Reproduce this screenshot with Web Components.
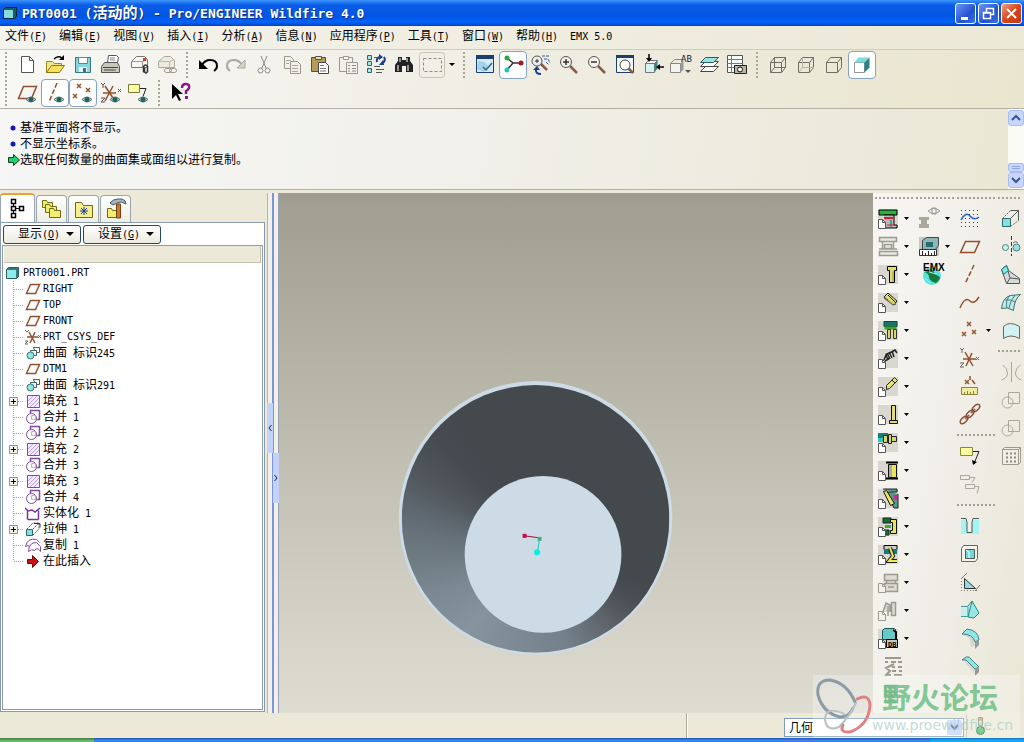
<!DOCTYPE html>
<html lang="zh-CN">
<head>
<meta charset="utf-8">
<title>PRT0001 (活动的) - Pro/ENGINEER Wildfire 4.0</title>
<style>
  html, body { height: 100%; }
  body {
    margin: 0;
    overflow: hidden;
    background: #ece9d8;
    font: 10px/16px "DejaVu Sans Mono", "Noto Sans CJK SC", monospace;
    color: #000;
  }
</style>
</head>
<body>
<app-window></app-window>

<script>
'use strict';

// ---- icon fragments -------------------------------------------------

const EYE = `<path d="M11 18.500q5-5 10 0q-5 5-10 0z" fill="#b9c9c4" stroke="#5d6f6c"/><circle cx="16" cy="18.500" r="2.500" fill="#1d6464"/>`;
const PAGE = `<path d="M2.500 13.500h4l3 3v6h-7z" fill="#fff" stroke="#555"/><path d="M6.500 13.500v3h3" fill="none" stroke="#555"/>`;
const GPAGE = `<path d="M2.500 13.500h4l3 3v6h-7z" fill="#f2f1ec" stroke="#9c9a8e"/><path d="M6.500 13.500v3h3" fill="none" stroke="#9c9a8e"/>`;
const PAD = `<path d="M2 3h20v19H2z" fill="#d9d7d0"/>`;
const XMARK = (x, y, c = '#9a5530') => `<path d="M${x - 2} ${y - 2}l4 4m0-4l-4 4" stroke="${c}" stroke-width="1.500" fill="none"/>`;
const LENS = (x, y) => `<path d="M${x + 4} ${y + 4}l7 7" stroke="#8a5a48" stroke-width="2.500"/><circle cx="${x}" cy="${y}" r="5.500" fill="#f4f3ee" stroke="#555"/>`;
const CUBE = `<path d="M4.500 9.500h11v10h-11zM4.500 9.500l4-5h11v10l-4 5M15.500 9.500l4-5" fill="none" stroke="#6f6d66"/>`;

// 24x24 toolbar glyphs
const ICONS = {
  new: `<path d="M6.500 3.500h8l4 4v12h-12z" fill="#fff" stroke="#555"/><path d="M14.500 3.500v4h4" fill="none" stroke="#555"/>`,
  open: `<path d="M3.500 19.500v-11h6l2 2h7v3" fill="#f0e68c" stroke="#a08a20"/><path d="M3.500 19.500l5-7h13l-5 7z" fill="#f7e060" stroke="#8a7510"/><path d="M11 6q4-4 8-1" fill="none" stroke="#000" stroke-width="1.500"/><path d="M21 2v5h-5z"/>`,
  save: `<path d="M4.500 4.500h15v15h-15z" fill="#86d8dc" stroke="#35777d"/><path d="M7.500 4.500h9v6h-9z" fill="#fff" stroke="#4d9096"/><path d="M8 14h8v5H8z" fill="#e9f7f7"/><path d="M12 15h3v4h-3z" fill="#3a7379"/>`,
  print: `<path d="M8.500 9.500l1-7h8l2 2-1 5z" fill="#fff" stroke="#555"/><path d="M11 5h5m-5 2h5" stroke="#888"/><path d="M2.500 13.500l3-4h13l2 4v6h-18z" fill="#c9c7bd" stroke="#555"/><path d="M4 14.500h15M5 17h11" stroke="#444"/><path d="M15 17h2" stroke="#48b048"/>`,
  mail: `<path d="M4.500 8.500l5-5h8l3 3v8h-16z" fill="#f6f6f2" stroke="#777"/><path d="M4.500 8.500h11l5-2m-5 2v6" fill="none" stroke="#999"/><path d="M16 5h3v3h-3z" fill="#c8402f"/><path d="M16.500 19.500v-6q2-3 4 0v5q-2 3-3 0v-4" fill="none" stroke="#333" stroke-width="1.500"/>`,
  maillink: `<path d="M3.500 8.500l6-5h6l4 4v7h-16z" fill="#eceae1" stroke="#aaa79b"/><path d="M3.500 8.500h11l5-2m-5 2v6" fill="none" stroke="#bbb8ac"/><rect x="9.500" y="15.500" width="7" height="4" rx="2" fill="none" stroke="#99968b"/><rect x="14.500" y="15.500" width="7" height="4" rx="2" fill="none" stroke="#99968b"/>`,
  undo: `<path d="M6 12q3-5 8-5q7 0 7 6q0 3-3 5" fill="none" stroke="#000" stroke-width="2"/><path d="M3 7v9h9z"/>`,
  redo: `<path d="M18 12q-3-5-8-5q-7 0-7 6q0 3 3 5" fill="none" stroke="#aaa79b" stroke-width="2"/><path d="M21 7v8h-8z" fill="#d5d2c6" stroke="#aaa79b"/>`,
  cut: `<path d="M9 3l5 12M15 3l-5 12" stroke="#8e8b80" fill="none"/><circle cx="8.500" cy="17.500" r="2.500" fill="none" stroke="#8e8b80"/><circle cx="15.500" cy="17.500" r="2.500" fill="none" stroke="#8e8b80"/>`,
  copy: `<path d="M4.500 3.500h6l3 3v9h-9z" fill="#f2f0e8" stroke="#9b988d"/><path d="M10.500 8.500h7l3 3v9h-10z" fill="#f2f0e8" stroke="#9b988d"/><path d="M6 7.500h5M6 10.500h3M12 12.500h6M12 15.500h6M12 18.500h6" stroke="#aaa79b"/>`,
  paste: `<path d="M3.500 4.500h14v14h-14z" fill="#b59a58" stroke="#5c5030"/><path d="M7.500 3.500h6v3h-6z" fill="#e6dcb8" stroke="#555"/><path d="M10.500 9.500h7l3 3v8h-10z" fill="#fff" stroke="#444"/><path d="M12 12.500h4M12 15.500h6M12 18h6" stroke="#777"/>`,
  pastespecial: `<path d="M3.500 4.500h13v14h-13z" fill="#f2f0e8" stroke="#9b988d"/><path d="M7.500 3.500h5v3h-5z" fill="#fff" stroke="#9b988d"/><path d="M10.500 9.500h11v11h-11z" fill="#f2f0e8" stroke="#9b988d"/><path d="M12 12.500h2m2 0h4M12 15.500h2m2 0h4M12 18h2m2 0h4" stroke="#8e8b80"/>`,
  regen: `<path d="M3.500 2.500h4v4h-4zM3.500 8.500h4v4h-4zM3.500 15.500h4v4h-4z" fill="#a4e6e2" stroke="#2c6666"/><path d="M10 4.500h3M10 13.500h6M12 16.500h8M12 19.500h6" stroke="#555"/><path d="M13 9q-1-4 3-5M20 4q2 3-1 6" fill="none" stroke="#163e94" stroke-width="2"/><path d="M15 1l4 3-4 3zM20 12h-5l4-5z" fill="#163e94"/>`,
  find: `<path d="M6 4h4v3h4V4h4v4l3 4v7h-7v-6h-4v6H3v-7l3-4z" fill="#222"/><path d="M6 12v6M16 12v6M8 5v4M15 5v4" stroke="#bbb" stroke-width="1.500"/>`,
  marquee: `<rect x="-.5" y="-.5" width="25" height="25" rx="3" fill="none" stroke="#c9c5b4"/><rect x="3.500" y="5.500" width="18" height="13" fill="none" stroke="#8f8c82" stroke-dasharray="3 2"/>`,
  repaint: `<path d="M3.500 3.500h17v16h-17z" fill="#d4ecf8" stroke="#1c3d72"/><path d="M3 2h18v4H3z" fill="#1c3d72"/><path d="M5 8q8 0 11 6l-5 5-7-3z" fill="#a4d0e8"/><path d="M10 14l3 3 6-7" fill="none" stroke="#355f8c" stroke-width="1.500"/>`,
  spin: `<path d="M6 5l6 5-6 7M12 10h8" fill="none" stroke="#333" stroke-width="1.500"/><circle cx="6" cy="5" r="2.500" fill="#24a83c"/><circle cx="20" cy="10" r="2.500" fill="#a81824"/><circle cx="6" cy="17" r="2.500" fill="#24c4c4"/>`,
  orient: `<path d="M11 10l7 7" stroke="#8a5a48" stroke-width="2.500"/><circle cx="8" cy="8" r="5" fill="#eee" stroke="#555"/><path d="M6 8h4M8 6v4" stroke="#333"/><path d="M13 3h8M15 6h4l2 4M17 9l3 3" stroke="#3957a0" stroke-dasharray="3 1" fill="none"/><path d="M12 21q-6 0-5-5" fill="none" stroke="#163e94" stroke-width="2"/><path d="M4 17l4-4 3 4z" fill="#163e94"/>`,
  zoomin: LENS(9, 9) + `<path d="M6 9h6M9 6v6" stroke="#333" stroke-width="1.500"/>`,
  zoomout: LENS(9, 9) + `<path d="M6 9h6" stroke="#333" stroke-width="1.500"/>`,
  refit: `<path d="M3.500 3.500h17v16h-17z" fill="#f4f6f8" stroke="#1c3d72"/><path d="M3 2h18v3H3z" fill="#1c3d72"/><path d="M15 15l5 5" stroke="#8a5a48" stroke-width="2.500"/><circle cx="12" cy="12" r="5" fill="#fff" stroke="#444"/>`,
  views: `<path d="M4.500 10.500h9v9h-9z" fill="#d6f4f2" stroke="#777"/><path d="M4.500 10.500l3-3h9l-3 3z" fill="#fff" stroke="#777"/><path d="M13.500 10.500l3-3v8l-3 4z" fill="#38888a"/><path d="M8 1v6M23 14h-5" stroke="#000" stroke-width="1.500"/><path d="M5 5h6l-3 4zM19 11v6l-4-3z"/>`,
  namedview: `<path d="M1.500 10.500h10v9h-10z" fill="#f4f3ee" stroke="#888"/><path d="M1.500 10.500l4-4h8" fill="none" stroke="#888"/><path d="M11.500 10.500l3-3v9l-3 3z" fill="#999"/><text x="12" y="9" font-family="DejaVu Sans Mono" font-size="9" fill="#222">AB</text><path d="M16 17h6l-3 3z" fill="#555"/>`,
  layers: `<path d="M3.500 18.500l5-5h13l-5 5zM3.500 13.500l5-5h13l-5 5z" fill="#fff" stroke="#444"/><path d="M3.500 9.500l5-5h13l-5 5z" fill="#96e6e0" stroke="#2a5c5c"/>`,
  viewmgr: `<path d="M2.500 2.500h15v17h-15z" fill="#fff" stroke="#555"/><path d="M2.500 6.500h15m-15 4h15m-15 4h15M6.500 2.500v17" stroke="#777"/><path d="M9.500 12.500h12v8h-12z" fill="#b9b6a4" stroke="#222"/><circle cx="15" cy="16.500" r="2.500" fill="#fff" stroke="#111"/>`,
  wire: CUBE + `<path d="M8.500 4.500v10h11M8.500 14.500l-4 5" fill="none" stroke="#6f6d66"/>`,
  hidden: CUBE + `<path d="M8.500 4.500v10h11M8.500 14.500l-4 5" fill="none" stroke="#b5b2a8"/>`,
  nohidden: CUBE,
  shaded: `<path d="M4.500 9.500h10v10h-10z" fill="#fff" stroke="#999"/><path d="M4.500 9.500l4-5h11l-5 5z" fill="#78dce0"/><path d="M14.500 9.500l5-5v10l-5 5z" fill="#2d8084"/>`,

  dplane: `<path d="M3.500 17.500l5-12h13l-5 12z" fill="none" stroke="#93502e" stroke-width="1.500"/>` + EYE,
  daxis: `<path d="M14 2l-8 19" fill="none" stroke="#93502e" stroke-width="1.500" stroke-dasharray="5 2"/>` + EYE,
  dpoint: XMARK(8, 5) + XMARK(4, 15) + XMARK(17, 9) + EYE,
  dcsys: `<path d="M4 12h13M14 5L6 20M6 5l8 12" fill="none" stroke="#93502e" stroke-width="1.500"/><path d="M2 2l2 2 2-2m-2 2v3M2 17h4l-4 4h4M19 8l3 3m0-3l-3 3" fill="none" stroke="#555"/>` + EYE,
  dnote: `<path d="M1.500 3.500h11v8h-11z" fill="#ffffa0" stroke="#777b40"/><path d="M13 7.500h6l-3 8" fill="none" stroke="#222"/>` + EYE,
  whatsthis: `<path d="M4 3v15l4-4 3 6 2-1-3-6h5z"/><path d="M14 7q0-4 4-4t3 4q-1 2-3 3v3" fill="none" stroke="#8a168a" stroke-width="2.500"/><path d="M17 15h3v3h-3z" fill="#8a168a"/>`,

  // mold base column
  plate: PAD + `<path d="M3 4h18v5H3z" fill="#26b43a" stroke="#000"/><path d="M8 9h10v10h3v3H9" fill="#c4b4b4" stroke="#000"/><path d="M8 12h9" stroke="#d02030" stroke-width="2"/><path d="M15 14v7" stroke="#30a8a8" stroke-width="2"/><path d="M11 19h8" stroke="#d02030"/>` + PAGE,
  plategrey: `<path d="M3.500 3.500h17v4h-17zM6.500 7.500v7M17.500 7.500v7M8.500 10.500h7v4h-7zM3.500 17.500h18v4h-18zM3 15h18" fill="#e8e7e0" stroke="#9c9a8e" stroke-width="1.500"/>`,
  screw: PAD + `<path d="M11.500 4.500h9v4h-2v12h-5v-12h-2z" fill="#e2de70" stroke="#000"/><path d="M17 9v11" stroke="#98953a"/>` + PAGE,
  pins: PAD + `<path d="M8 7l4-4 9 8-3 4zM12 5l8 8" fill="#e0dc6c" stroke="#222"/><path d="M8 8l9 7 3-1" stroke="#555" fill="#c8c068"/>` + PAGE,
  guide: PAD + `<path d="M8 3.500h13v5H8z" fill="#15766c" stroke="#084840"/><path d="M8.500 8.500h12v3h-12z" fill="#48a028"/><path d="M11.500 11.500h3v9h-3zM17.500 11.500h3v9h-3z" fill="#dcd858" stroke="#333"/>` + PAGE,
  spring: PAD + `<path d="M8 14l2-5 2 5M11 7l3 6M13 6l3 6M16 5l2 6M10 9l9-5 2 3M9 15l5-3" fill="none" stroke="#222" stroke-width="1.500"/>` + PAGE,
  pencil: PAD + `<path d="M10.500 11.500l8-8 3 3-8 8-3 1z" fill="#e6e276" stroke="#222"/><path d="M16 6l3 3" stroke="#222"/>` + PAGE,
  bolt: PAD + `<path d="M15.500 3.500h4v15h-4zM13.500 18.500h8v3h-8z" fill="#e2de70" stroke="#111"/>` + PAGE,
  pipe: PAD + `<path d="M2 3h10v5H2z" fill="#168078"/><path d="M2 8h5v4H2z" fill="#28c8c0"/><path d="M7.500 5.500h4v7h-4zM12.500 4.500h3v9h-3zM15.500 6.500h5v5h-5z" fill="#d8d470" stroke="#222"/>` + PAGE,
  sleeve: PAD + `<path d="M10 4.500h12M10 20.500h12" stroke="#000" stroke-width="2"/><path d="M12.500 6.500h8v13h-8z" fill="#e8e45c" stroke="#111"/><path d="M13 7h3v12h-3z" fill="#aaa"/>` + PAGE,
  slider: PAD + `<path d="M7 3h14v3H10l8 16h4V8" fill="#5a9890" stroke="#222"/><path d="M7.500 5.500l3-1 8 13-4 2z" fill="#e8e45c" stroke="#111"/><path d="M17 9h4v5h-3z" fill="#c030a0"/>` + PAGE,
  latch: PAD + `<path d="M7 4h8v5H7zM7 16h6v5H7z" fill="#137030" stroke="#222"/><path d="M14.500 5.500h6v14h-6v-3h2v-8h-2z" fill="#e8e45c" stroke="#111"/><path d="M9 11h6v3H9z" fill="#40a840"/>` + PAGE,
  lifter: PAD + `<path d="M8 3.500h13v4H8z" fill="#d0ccc0" stroke="#000"/><path d="M8 7h13v5H8z" fill="#137a78"/><path d="M14 6l3 8-4 5h8" fill="none" stroke="#222" stroke-width="4"/><path d="M14 6l3 8-4 5h8" fill="none" stroke="#f0e850" stroke-width="2"/>` + PAGE,
  pressgrey: `<path d="M8.500 4.500h13v6h-13zM10.500 10.500h9v3h-9zM8.500 13.500h13v8h-13zM12 17h6" fill="#dddbd2" stroke="#9c9a8e" stroke-width="1.500"/>` + GPAGE,
  rollgrey: `<path d="M7 14l3-9 4 2v7M15.500 4.500h4v13h-4zM12 8v10" fill="#dddbd2" stroke="#9c9a8e" stroke-width="1.500"/>` + GPAGE,
  library: PAD + `<path d="M6.500 4.500l2-2h10l1 1v10h-13z" fill="#68c8c8" stroke="#155"/><path d="M17 4l3 2v9" fill="none" stroke="#000" stroke-width="2"/><path d="M10.500 13.500h11v8h-11z" fill="#c8c6b8" stroke="#000"/><text x="12" y="21" font-family="DejaVu Sans Mono" font-size="7" font-weight="bold">DB</text>` + PAGE,
  bomgrey: `<path d="M11 4h16M11 8h3M17 8h5M24 8h4M11 22l5-5-4-3 8-4M18 13h3M24 13h4M18 17h4M25 17h3M12 21h5M20 21h8" transform="translate(-2 0)" fill="none" stroke="#9c9a8e" stroke-width="2"/>`,
  chartgrey: `<path d="M9.500 3.500h12v7h-12zM9.500 12.500h12v8h-12zM12 15h7M12 18h7M12 6h7" fill="#d5d3c8" stroke="#7c9a82" stroke-width="1.500"/>`,
  lampgrey: `<path d="M11 5q6-5 12 0q-6 5-12 0zM15 2h4v6h-4z" fill="#eee" stroke="#9c9a8e"/><path d="M2 11h10v3h-2v4h2v4H2v-4h2v-4H2z" fill="#aaa79b"/>`,
  measure: `<path d="M2 3h20v19H2z" fill="#c9c7c0"/><path d="M5.500 6.500l4-3h12v8l-3 4h-13z" fill="#8fb6b6" stroke="#444"/><path d="M9 8h7v5H9z" fill="#276c6c"/><path d="M2.500 15.500h17v6h-17z" fill="#fff" stroke="#333"/><path d="M5.500 17v4m3-2v2m3-4v4m3-2v2m3-4v4" stroke="#222"/>`,
  emx: `<circle cx="15" cy="14" r="9" fill="#5ce0dc"/><path d="M7 10q5 1 5 5t7 6q4-3 4-6l-5-3-2-4z" fill="#177a38"/><path d="M8 16l5 5M12 10l7 2" stroke="#a4f4f4"/><text x="6" y="9" font-family="Liberation Sans" font-size="10" font-weight="bold">EMX</text>`,

  // datum column
  sketch: `<path d="M3 4.500h18M3 8.500h18M3 12.500h18M3 16.500h18M3 20.500h18" stroke="#1c3a96" stroke-dasharray="1 3"/><path d="M3 14q5-9 9-4t9 1" fill="none" stroke="#2c62d0" stroke-width="1.500"/>`,
  plane: `<path d="M2.500 18.500l5-11h14l-5 11z" fill="none" stroke="#93502e" stroke-width="1.500"/>`,
  axis: `<path d="M16 3L7 22" stroke="#93502e" stroke-width="1.500" stroke-dasharray="5 2"/>`,
  curve: `<path d="M2 18q5-12 10-7 4 4 9-4" fill="none" stroke="#93502e" stroke-width="1.500"/>`,
  points: XMARK(11, 6) + XMARK(6, 16) + XMARK(16, 14),
  csys: `<path d="M5 13h13M14 7L8 20M7 6l8 14" fill="none" stroke="#93502e" stroke-width="1.500"/><path d="M2 2l2 2 2-2m-2 2v3M2 17h4l-4 4h4M18 11l3 3m0-3l-3 3" fill="none" stroke="#666"/>`,
  analysis: XMARK(9, 8) + `<path d="M12 2v4M14 6l3 4" stroke="#93502e" stroke-width="1.500"/><path d="M3.500 13.500h16v7h-16z" fill="#f0eca0" stroke="#8a8640"/><path d="M6.500 18v2m3-3v3m3-2v2m3-3v3" stroke="#8a8640"/>`,
  chain: `<g fill="none" stroke="#8a5038" stroke-width="1.500"><ellipse cx="6" cy="18" rx="4.500" ry="2.500" transform="rotate(-45 6 18)"/><ellipse cx="12" cy="12" rx="4.500" ry="2.500" transform="rotate(-45 12 12)"/><ellipse cx="18" cy="6" rx="4.500" ry="2.500" transform="rotate(-45 18 6)"/><path d="M7 17l4-4M13 11l4-4"/></g>`,
  note: `<path d="M2.500 3.500h12v8h-12z" fill="#ffffa0" stroke="#888a30"/><path d="M15 7.500h6l-5 12" fill="none" stroke="#222"/><path d="M14 16l1 5 4-3z"/>`,
  notesgrey: `<path d="M2.500 3.500h9v4h-9zM7.500 12.500h9v4h-9zM12 5.500h5l-3 5M17 14.500h4l-2 7" fill="none" stroke="#aaa79b"/>`,
  hole: `<path d="M3 6h18v14H3z" fill="#a4f4f4"/><path d="M3 4.500h5l1 4v10h5v-10l1-4h6" fill="#f0eee4" stroke="#555"/>`,
  shell: `<path d="M3.500 6.500l2-3h14v13l-2 3h-14z" fill="#f4f3ea" stroke="#666"/><path d="M7.500 7.500h9v9h-9z" fill="#70d8d8" stroke="#555"/><path d="M8 8l3 2v6" fill="none" stroke="#fff"/>`,
  rib: `<path d="M3 9l6-6M17 21l5-6" stroke="#777"/><path d="M6.500 8.500v10h11z" fill="#90dce0" stroke="#333"/><path d="M3 20.500h18M3.500 8v12" stroke="#777" stroke-dasharray="1 2"/>`,
  draft: `<path d="M3 7h8l3 12H3z" fill="#c4f0f0"/><path d="M3 8.500h7v10H3" fill="none" stroke="#4a9c9c"/><path d="M10 8l4-5 7 12-5 5-6-1 4-16" fill="#98e8e8" stroke="#2a8484"/>`,
  round: `<path d="M5 4q13-2 13 15l-5 2q0-11-8-12z" fill="#d8d5cc"/><path d="M4 8l5-5q11 1 12 11l-4 2q-2-8-13-8z" fill="#8ce8e8" stroke="#4a8080"/><path d="M17 16l4-2v5l-4 4z" fill="#999"/>`,
  chamfer: `<path d="M4 5l13 15v-8z" fill="#dcd9d0"/><path d="M4 6l4-3h3l10 10-4 2L8 6z" fill="#8ce8e8" stroke="#4a8080"/><path d="M17 15l4-2v5l-4 4z" fill="#999"/>`,

  // feature column
  extrude: `<path d="M3.500 12.500h8v8h-8z" fill="#86e0e0" stroke="#2a6c6c"/><path d="M3.500 12.500l8-8M11.500 20.500l8-6" stroke="#666" stroke-dasharray="2 1"/><path d="M11.500 4.500h8v10M11.500 12.500l8-8" fill="none" stroke="#555"/>`,
  revolve: `<circle cx="6.500" cy="13.500" r="3" fill="#c8f0f0" stroke="#4a8080"/><circle cx="17.500" cy="13.500" r="3.500" fill="#98e0e0" stroke="#4a8080"/><path d="M12.500 2v20" stroke="#333" stroke-dasharray="4 2"/><path d="M14 9q3-3 5 0" stroke="#666" fill="none"/>`,
  sweep: `<path d="M2.500 7.500l5-4 2 5 11 8v5h-13z" fill="#d4dada" stroke="#555"/><path d="M2.500 7.500l5-4 2 5-5 4z" fill="#80e8e8" stroke="#2a6c6c"/><path d="M9 9l2 7 9 1M11 16l-3 5" fill="none" stroke="#555"/>`,
  boundary: `<path d="M2.500 18.500q1-11 9-13l10-1q-6 4-7 16-6-4-12-2z" fill="#b8ecec" stroke="#4a6c6c"/><path d="M6 10q6-1 10 2M11 5q-5 6-3 13M16 5q-5 6-6 13" fill="none" stroke="#4a7c7c"/>`,
  style: `<path d="M4.500 8.500q6-6 16 0v12q-9-5-16 0z" fill="#d4f2f2" stroke="#666"/>`,
  mirrorgrey: `<path d="M3.500 5q5 3 5 8t-6 7M21.500 5q-5 3-5 8t6 7M12.500 2v20" fill="none" stroke="#aaa79b"/>`,
  mergegrey: `<circle cx="8.500" cy="14.500" r="5.500" fill="none" stroke="#aaa79b"/><path d="M9.500 4.500h11v11h-11z" fill="none" stroke="#aaa79b"/>`,
  patterngrey: `<path d="M3.500 5.500l2-2h16v15l-2 2h-16zM3.500 5.500h16v15M19.500 5.500l2-2" fill="#f0eee6" stroke="#9c9a8e"/><path d="M7 9.500h10M7 13.500h10M7 17.500h10" stroke="#8e8b80" stroke-width="2" stroke-dasharray="2 2"/>`,

  // panel tabs
  tabtree: `<path d="M7.500 4v14M7 11.500h9" stroke="#000"/><path d="M5.500 2.500h4v4h-4zM5.500 9.500h4v4h-4zM5.500 16.500h4v4h-4zM13.500 9.500h4v4h-4z" fill="#fff" stroke="#000" stroke-width="1.500"/>`,
  tabfolders: `<g fill="#f4ee70" stroke="#6e6a18"><path d="M2.500 10.500v-7h4l1 2h5v5z"/><path d="M5.500 15.500v-8h4l1 2h6v6z"/><path d="M9.500 20.500v-9h4l1 2h6v7z"/></g>`,
  tabfav: `<path d="M3.500 20.500v-15h6l2 3h9v12z" fill="#f4ee90" stroke="#6e6a18"/><path d="M12 10v8M8 14h8M9 11l6 6m0-6l-6 6" stroke="#1c3a96"/>`,
  tabtools: `<path d="M3.500 20.500v-9h4l1 2h6v7z" fill="#f4ee70" stroke="#6e6a18"/><path d="M6 6q3-4 8-4h4q4 1 4 5l-5-2-4 1-4 2z" fill="#a8b4bc" stroke="#4a5a66"/><path d="M12.500 7h4v14h-4z" fill="#c87a30" stroke="#7a4010"/>`,
};

// 16x16 model tree glyphs
const TREE_ICONS = {
  part: `<path d="M1.500 4.500l2-2h10v9l-2 2h-10z" fill="#387c7c" stroke="#2a5c5c"/><path d="M2 5h9v8H2z" fill="#8cecec"/>`,
  plane: `<path d="M1.500 12.500l4-9h9l-4 9z" fill="none" stroke="#93502e" stroke-width="1.500"/>`,
  csys: `<path d="M2 8h11M10 3L5 14M4 3l6 11" fill="none" stroke="#93502e" stroke-width="1.500"/><path d="M0 1l2 2 2-2M0 12h3l-3 3h3M13 6l3 3m0-3l-3 3" fill="none" stroke="#666"/>`,
  surf: `<path d="M8.500 2.500h6v5h-4z" fill="#fff" stroke="#4a6060"/><path d="M5.500 5.500h6v5h-5z" fill="#e8f6f6" stroke="#4a6060"/><circle cx="5.500" cy="10.500" r="3.500" fill="#8ce8e0" stroke="#4a7070"/>`,
  fill: `<path d="M2.500 2.500h12v12h-12z" fill="#f4ecfc" stroke="#8048a0"/><path d="M3 8l5-5M3 12l9-9M5 14l9-9M9 14l5-5" stroke="#c0a0e4"/>`,
  merge: `<path d="M5.500 4.500v-3h9v9h-3" fill="none" stroke="#8048a0" stroke-width="1.500"/><circle cx="6.500" cy="9.500" r="5" fill="none" stroke="#8048a0"/><path d="M6.500 6.500h4v4h-4z" fill="none" stroke="#c0b0d0"/>`,
  solid: `<path d="M2.500 14.500v-9M13.500 14.500v-9M2.500 14.500h11M0 3l3 3 4-1 3 2 5-4" fill="none" stroke="#703898" stroke-width="1.500"/>`,
  extrude: `<path d="M1.500 8.500h6v6h-6z" fill="#86e0e0" stroke="#2a6c6c"/><path d="M2 8l6-6h6v6l-6 6M8 8l6-6" fill="none" stroke="#555" stroke-dasharray="2 1"/><path d="M9 2.500h6v4" stroke="#333" fill="none"/>`,
  copy: `<path d="M.5 9.500q2-9 11-7l3 3M.5 9.500q3-2 4 0M3.500 14.500q0-9 8-9l4 4v5q-3-5-6-1-3-2-6 1z" fill="none" stroke="#8048a0"/>`,
  insert: `<path d="M2.500 6.500h5v-4l6 6-6 6v-4h-5z" fill="#c81418" stroke="#800"/>`,
};

// CJK glyphs are set at 12px beside 10px latin, so both fill the same cell grid.
// "_X_" marks the mnemonic letter.
function mixed(text) {
  return text
      .replace(/[\u3000-\u9fff]+/g, run => `<span class="cjk">${run}</span>`)
      .replace(/_([A-Z])_/g, '<u>$1</u>');
}

const BASE = `
  :host { display: block; box-sizing: border-box; }
  * { box-sizing: border-box; }
  button { font: inherit; color: inherit; margin: 0; padding: 0; border: 0; background: none; }
  svg { display: block; flex: none; }
  .cjk { font-size: 12px; }
`;

class BaseElement extends HTMLElement {
  constructor() {
    super();
    this.attachShadow({mode: 'open'});
  }

  connectedCallback() {
    this.shadowRoot.innerHTML = `<style>${BASE}</style>` + this.render();
  }
}

class PeIcon extends BaseElement {
  render() {
    return `
      <style>:host { flex: none; width: 24px; height: 24px; } svg { overflow: visible; }</style>
      <svg width="24" height="24" viewBox="0 0 24 24" aria-hidden="true">${ICONS[this.getAttribute('name')]}</svg>`;
  }
}

class TitleBar extends BaseElement {
  render() {
    return `
      <style>
        :host {
          display: flex; align-items: center; gap: 4px; height: 26px; padding: 0 2px;
          background: linear-gradient(#3c96fc, #0a5ce8 5px, #0254e2 16px, #0464fa 22px, #0340c4);
        }
        h1 { flex: 1; margin: 0; font: bold 13px/20px "DejaVu Sans Mono", "Noto Sans CJK SC", monospace; color: #fff; text-shadow: 1px 1px #0a2c88; }
        .cjk { font-size: 15px; }
        div { display: flex; gap: 2px; }
        button { width: 21px; height: 21px; border: 1px solid #fff; border-radius: 3px; background: linear-gradient(135deg, #6c98f4, #2450d0 60%, #3c74e8); }
        button.close { background: linear-gradient(135deg, #f0a084, #d8451c 50%, #c03a14); }
      </style>
      <svg width="16" height="16" viewBox="0 0 16 16"><path d="M1.500 4.500l2-2h11v9l-2 2h-11z" fill="#1c5c60" stroke="#124"/><path d="M2 5h9v8H2z" fill="#84dcdc"/></svg>
      <h1>${mixed('PRT0001 (活动的) - Pro/ENGINEER Wildfire 4.0')}</h1>
      <div>
        <button aria-label="最小化"><svg width="19" height="19"><path d="M5 13h7v3H5z" fill="#fff"/></svg></button>
        <button aria-label="还原"><svg width="19" height="19"><path d="M7.500 8V4.500h7v6H12M4.500 8.500h7v6h-7zM4 9h8" fill="none" stroke="#fff" stroke-width="1.500"/></svg></button>
        <button class="close" aria-label="关闭"><svg width="19" height="19"><path d="M5 5l9 9m0-9l-9 9" stroke="#fff" stroke-width="2"/></svg></button>
      </div>`;
  }
}

class MenuBar extends BaseElement {
  render() {
    const items = ['文件(_F_)', '编辑(_E_)', '视图(_V_)', '插入(_I_)', '分析(_A_)', '信息(_N_)',
      '应用程序(_P_)', '工具(_T_)', '窗口(_W_)', '帮助(_H_)', 'EMX 5.0'];
    return `
      <style>
        :host { height: 24px; padding: 2px 5px; border-bottom: 1px solid #cfccbb; background: linear-gradient(90deg, #f4f3ec, #ebe8d6); }
        nav { display: flex; gap: 12px; }
        button { white-space: nowrap; line-height: 16px; }
      </style>
      <nav>${items.map(item => `<button>${mixed(item)}</button>`).join('')}</nav>`;
  }
}

// items: space separated icon names; "|" is a grip, "v" a drop arrow, "+" prefix means pressed
class ToolBar extends BaseElement {
  render() {
    const html = this.getAttribute('items').split(' ').map(item => {
      if (item === '|') return '<i></i>';
      if (item === 'v') return '<button class="drop" aria-label="more"><svg width="6" height="4"><path d="M0 0h6L3 3z"/></svg></button>';
      const on = item[0] === '+';
      const name = on ? item.slice(1) : item;
      return `<button aria-label="${name}" aria-pressed="${on}"><pe-icon name="${name}"></pe-icon></button>`;
    }).join('');
    return `
      <style>
        :host { display: flex; align-items: center; height: 28px; }
        i { width: 3px; height: 26px; margin: 0 5px; background: repeating-linear-gradient(#a9a798 0 2px, transparent 2px 4px); background-size: 2px 100%; background-repeat: no-repeat; }
        button { display: grid; place-items: center; width: 28px; height: 28px; border: 1px solid transparent; border-radius: 4px; }
        button[aria-pressed=true] { background: #fff; border-color: #86a2bc; }
        .drop { width: 12px; }
      </style>${html}`;
  }
}

class MessageLog extends BaseElement {
  render() {
    return `
      <style>
        :host { display: flex; height: 82px; border: solid #b3b0a1; border-width: 1px 0; background: linear-gradient(100deg, #f6f6f6, #f1f0ea 45%, #eae7d4); }
        ul { flex: 1; margin: 0; padding: 11px 8px; list-style: none; }
        li { display: flex; align-items: center; height: 16px; }
        .bar { display: flex; flex-direction: column; width: 16px; padding: 1px 0; background: #fbfbf6; }
        .bar button { display: grid; place-items: center; height: 16px; border: 1px solid #a9bdf0; border-radius: 3px; background: #c8d6fb; }
        .bar span { flex: 1; }
        .bar b { height: 9px; border: 1px solid #a9bdf0; border-radius: 2px; background: repeating-linear-gradient(#c8d6fb 0 1px, #8ca8e8 1px 2px) center / 8px 5px no-repeat #c8d6fb; }
      </style>
      <ul>
        <li><svg width="12" height="12"><circle cx="5" cy="6" r="2.500" fill="#1414c4"/></svg>${mixed('基准平面将不显示。')}</li>
        <li><svg width="12" height="12"><circle cx="5" cy="6" r="2.500" fill="#1414c4"/></svg>${mixed('不显示坐标系。')}</li>
        <li><svg width="12" height="12"><path d="M.5 3.500h5v-3l6 5.500-6 5.500v-3h-5z" fill="#22d070" stroke="#0a4020"/></svg>${mixed('选取任何数量的曲面集或面组以进行复制。')}</li>
      </ul>
      <div class="bar">
        <button aria-label="up"><svg width="10" height="8"><path d="M1 6l4-4 4 4" fill="none" stroke="#3c5490" stroke-width="2"/></svg></button>
        <span></span><b></b>
        <button aria-label="down"><svg width="10" height="8"><path d="M1 2l4 4 4-4" fill="none" stroke="#3c5490" stroke-width="2"/></svg></button>
      </div>`;
  }
}

class ModelTree extends BaseElement {
  glyph(name) {
    return `<svg width="16" height="16" viewBox="0 0 16 16">${TREE_ICONS[name]}</svg>`;
  }

  render() {
    // [icon, label, expandable]
    const nodes = [
      ['plane', 'RIGHT'], ['plane', 'TOP'], ['plane', 'FRONT'], ['csys', 'PRT_CSYS_DEF'],
      ['surf', '曲面 标识245'], ['plane', 'DTM1'], ['surf', '曲面 标识291'],
      ['fill', '填充 1', true], ['merge', '合并 1'], ['merge', '合并 2'],
      ['fill', '填充 2', true], ['merge', '合并 3'], ['fill', '填充 3', true],
      ['merge', '合并 4'], ['solid', '实体化 1'], ['extrude', '拉伸 1', true],
      ['copy', '复制 1'], ['insert', '在此插入'],
    ];
    const rows = nodes.map(([icon, label, plus], i) => {
      const end = i === nodes.length - 1 ? 8 : 16;
      const box = plus ? '<path d="M.5 4.500h8v8h-8z" fill="#f4f2ea" stroke="#7c94ac"/><path d="M2 8.500h5M4.500 6v5" stroke="#000"/>' : '';
      return `<li role="treeitem">
        <svg width="16" height="16"><path d="M4.500 0v${end}M5 8.500h9" stroke="#a9a696" stroke-dasharray="1 1"/>${box}</svg>
        ${this.glyph(icon)}<span>${mixed(label)}</span></li>`;
    }).join('');
    return `
      <style>
        :host { flex: 1; min-height: 0; overflow: hidden; }
        ul { margin: 0; padding: 0; list-style: none; }
        li { display: flex; align-items: center; height: 16px; padding-left: 6px; }
        li > span { padding-left: 2px; line-height: 16px; white-space: pre; }
        .root { padding-left: 2px; }
      </style>
      <ul role="tree">
        <li class="root" role="treeitem">${this.glyph('part')}<span>PRT0001.PRT</span></li>
        ${rows}
      </ul>`;
  }
}

class NavPanel extends BaseElement {
  render() {
    const arrow = '<svg width="8" height="5"><path d="M0 0h8L4 4z"/></svg>';
    return `
      <style>
        :host { display: flex; flex-direction: column; width: 265px; padding-bottom: 1px; }
        .tabs { display: flex; align-items: flex-end; gap: 1px; height: 29px; }
        .tabs button { display: grid; place-items: center; width: 31px; height: 27px; border: 1px solid #9aa6ae; border-bottom: 0; border-radius: 4px 4px 0 0; background: linear-gradient(#fdfdfb, #f0eee4); }
        .tabs .on { width: 35px; height: 29px; border-top: 2px solid #f0a030; background: #fff; }
        .body { flex: 1; min-height: 0; display: flex; flex-direction: column; gap: 1px; padding: 2px 1px 1px; border: 1px solid #8a9aaf; background: #fff; }
        .actions { display: flex; gap: 2px; padding-left: 1px; }
        .actions button { display: flex; justify-content: flex-end; align-items: center; gap: 6px; width: 78px; height: 19px; padding-right: 6px; border: 1px solid #24486c; border-radius: 3px; background: linear-gradient(#fff, #ece9de); line-height: 16px; }
        .tree { flex: 1; min-height: 0; display: flex; flex-direction: column; border: 1px solid #8a9aaf; }
        .head { height: 17px; margin: 0 1px 2px; border-right: 1px solid #c4c0ae; border-bottom: 1px solid #c4c0ae; background: #ece9d8; }
      </style>
      <div class="tabs" role="tablist">
        <button class="on" role="tab" aria-label="模型树"><pe-icon name="tabtree"></pe-icon></button>
        <button role="tab" aria-label="文件夹"><pe-icon name="tabfolders"></pe-icon></button>
        <button role="tab" aria-label="收藏夹"><pe-icon name="tabfav"></pe-icon></button>
        <button role="tab" aria-label="工具"><pe-icon name="tabtools"></pe-icon></button>
      </div>
      <div class="body">
        <div class="actions">
          <button><span>${mixed('显示(_O_)')}</span>${arrow}</button>
          <button><span>${mixed('设置(_G_)')}</span>${arrow}</button>
        </div>
        <div class="tree"><div class="head"></div><slot></slot></div>
      </div>`;
  }
}

class SplitHandle extends BaseElement {
  render() {
    return `
      <style>
        :host { display: grid; grid-template-columns: 6px 6px; width: 14px; padding-left: 2px; background: linear-gradient(90deg, transparent 2px, #a9b4cc 2px 3px, #f2f0e8 3px 7px, #7c94dc 7px 9px, #f2f0e8 9px 13px, #98a2b4 13px); }
        button { display: grid; place-items: center; align-self: center; width: 6px; height: 50px; background: #c3d3f8; }
        .close { margin-bottom: 50px; }
        .open { margin-top: 50px; }
      </style>
      <button class="close" aria-label="收起"><svg width="4" height="6"><path d="M3.500 0L1 3l2.500 3" fill="none" stroke="#223"/></svg></button>
      <button class="open" aria-label="展开"><svg width="4" height="6"><path d="M.5 0L3 3 .5 6" fill="none" stroke="#223"/></svg></button>`;
  }
}

class ModelView extends BaseElement {
  render() {
    return `
      <style>
        :host { flex: 1; min-width: 0; background: linear-gradient(#9f9c90, #bdbaae 45%, #dfddd2); }
        svg { width: 100%; height: 100%; }
        .cone { width: 268px; height: 268px; border-radius: 50%;
          background: conic-gradient(from 0deg at 141px 170px, #43494d 0deg 105deg, #4b5056 118deg, #5c6168 134deg, #74818a 165deg, #7c8992 194deg, #85949d 225deg, #7c8992 250deg, #6e7a82 270deg, #616b74 286deg, #50575d 303deg, #454b50 318deg, #43494d 328deg); }
      </style>
      <svg viewBox="0 0 595 520">
        <circle cx="257" cy="325" r="137" fill="#cddbe6"/>
        <foreignObject x="123" y="192" width="268" height="268"><div class="cone"></div></foreignObject>
        <circle cx="264.500" cy="361.500" r="78.500" fill="#cddbe6"/>
        <path d="M246 343l15 2" stroke="#a81038"/>
        <path d="M261 346l-2 13" stroke="#18c8b8"/>
        <path d="M244 341h4v4h-4z" fill="#d00838"/>
        <path d="M259 344h4v4h-4z" fill="#48b080"/>
        <circle cx="258.500" cy="359.500" r="3" fill="#00f0e4"/>
      </svg>`;
  }
}

class ToolColumn extends BaseElement {
  render() {
    const html = this.getAttribute('items').split(' ').map(item => {
      if (item === '-') return '<i></i>';
      const drop = item.endsWith('v!');
      const name = drop ? item.slice(0, -2) : item;
      const arrow = drop ? '<button class="drop" aria-label="more"><svg width="5" height="3"><path d="M0 0h5L2.500 3z"/></svg></button>' : '';
      return `<div><button aria-label="${name}"><pe-icon name="${name}"></pe-icon></button>${arrow}</div>`;
    }).join('');
    return `
      <style>
        div { display: flex; height: 28px; }
        button { display: grid; place-items: center; width: 27px; }
        .drop { width: 10px; }
        i { display: block; height: 14px; padding: 6px 2px 6px 1px; }
        i::before { content: ""; display: block; height: 2px; background: repeating-linear-gradient(90deg, #a3a194 0 2px, transparent 2px 4px); }
        i:first-of-type { height: 11px; padding-top: 4px; padding-bottom: 5px; }
      </style>${html}`;
  }
}

class StatusBar extends BaseElement {
  render() {
    return `
      <style>
        :host { display: flex; justify-content: flex-end; height: 25px; background: #ece9d8; }
        section { display: flex; justify-content: flex-end; align-items: center; width: 33%; border-left: 1px solid #aca899; box-shadow: inset 1px 0 #fff; }
        label { position: relative; width: 180px; }
        select { display: block; width: 100%; height: 19px; margin: 3px 0 0; padding: 0 4px; appearance: none; border: 1px solid #7f9db9; border-radius: 0; background: #fff; font: 12px/16px "Noto Sans CJK SC", sans-serif; color: #000; }
        label span { position: absolute; right: 2px; top: 5px; display: grid; place-items: center; width: 15px; height: 15px; border-radius: 2px; background: #c3d3fb; pointer-events: none; }
        .light { width: 58px; height: 23px; margin-left: 2px; padding-left: 8px; border-left: 1px solid #c4c0ae; }
      </style>
      <section>
        <label aria-label="过滤器"><select><option>几何</option></select>
          <span><svg width="9" height="7"><path d="M1 1l3.500 4L8 1" fill="none" stroke="#4d6185" stroke-width="2"/></svg></span></label>
        <div class="light"><svg width="12" height="22"><path d="M3.500 3.500h4v8h-4z" fill="#f0ead0" stroke="#8a8a70"/><path d="M4 4h3v3H4z" fill="#d89a88"/><circle cx="5.500" cy="16.500" r="4" fill="#48c060" stroke="#2c6838"/></svg></div>
      </section>`;
  }
}

class TaskStrip extends BaseElement {
  render() {
    return `
      <style>
        :host { display: flex; height: 4px; background: linear-gradient(#1c50b4, #3c84e4 2px); }
        b { width: 94px; background: linear-gradient(#3c7c3c, #6cc06c 3px); }
        s { width: 94px; margin-left: auto; background: linear-gradient(#1070c8, #18a8f0 2px); }
      </style><b></b><s></s>`;
  }
}

class SiteMark extends BaseElement {
  render() {
    return `
      <style>
        :host { display: flex; align-items: flex-start; width: 207px; height: 63px; background: #fff4; pointer-events: none; }
        p { margin: 0; font: bold 29px/42px "Noto Sans CJK SC", sans-serif; color: #64bc7ccc; padding-left: 10px; }
        small { display: block; font: 14px/17px "DejaVu Sans", sans-serif; color: #a6cbc4b0; white-space: nowrap; }
        .word { width: 148px; }
      </style>
      <svg width="59" height="63" viewBox="0 0 59 63" fill="none" stroke-linecap="round">
        <path d="M42 27Q34 8 17 5Q3 5 5 20Q10 38 27 42Q36 42 40 33" stroke="#8a9ca8" stroke-width="3"/>
        <path d="M31 39Q12 30 12 45Q14 57 26 52Q36 42 43 28" stroke="#b8c0c4" stroke-width="2"/>
        <path d="M44 24Q56 18 57 30Q56 50 37 57Q26 58 30 50" stroke="#dc8484" stroke-width="3"/>
      </svg>
      <div class="word"><p>野火论坛</p><small>www.proewildfire.cn</small></div>`;
  }
}

class AppWindow extends BaseElement {
  render() {
    return `
      <style>
        :host { position: relative; display: flex; flex-direction: column; height: 100vh; }
        .bars { padding: 1px 0; background: linear-gradient(100deg, #f7f7f4, #f0eee5 45%, #e9e5ce); }
        main { flex: 1; min-height: 0; display: flex; margin-top: 3px; }
        aside { display: grid; grid-template-columns: 41px 41px 41px 27px; padding-left: 1px; background: linear-gradient(100deg, #f7f6f4, #efede5 60%, #eae7d6); overflow: hidden; }
        site-mark { position: absolute; right: 4px; bottom: 4px; }
      </style>
      <title-bar></title-bar>
      <menu-bar></menu-bar>
      <div class="bars">
        <tool-bar items="| new open save print mail maillink | undo redo cut copy paste pastespecial regen find marquee v | repaint +spin orient zoomin zoomout refit views namedview layers viewmgr | wire hidden nohidden +shaded"></tool-bar>
        <tool-bar items="| dplane +daxis +dpoint dcsys dnote | whatsthis"></tool-bar>
      </div>
      <message-log></message-log>
      <main>
        <nav-panel><model-tree></model-tree></nav-panel>
        <split-handle></split-handle>
        <model-view></model-view>
        <aside>
          <tool-column items="- platev! plategreyv! screwv! pinsv! guidev! springv! pencilv! boltv! pipev! sleevev! sliderv! latchv! lifterv! pressgreyv! rollgreyv! libraryv! bomgrey chartgrey"></tool-column>
          <tool-column items="- lampgreyv! measurev! emx"></tool-column>
          <tool-column items="- sketch plane axis curve pointsv! csys analysis chain - note notesgrey - hole shell rib draft round chamfer"></tool-column>
          <tool-column items="- extrude revolve sweep boundary style - mirrorgrey mergegrey mergegrey patterngrey"></tool-column>
        </aside>
      </main>
      <status-bar></status-bar>
      <task-strip></task-strip>
      <site-mark></site-mark>`;
  }
}

customElements.define('pe-icon', PeIcon);
customElements.define('title-bar', TitleBar);
customElements.define('menu-bar', MenuBar);
customElements.define('tool-bar', ToolBar);
customElements.define('message-log', MessageLog);
customElements.define('model-tree', ModelTree);
customElements.define('nav-panel', NavPanel);
customElements.define('split-handle', SplitHandle);
customElements.define('model-view', ModelView);
customElements.define('tool-column', ToolColumn);
customElements.define('status-bar', StatusBar);
customElements.define('task-strip', TaskStrip);
customElements.define('site-mark', SiteMark);
customElements.define('app-window', AppWindow);
</script>
</body>
</html>
